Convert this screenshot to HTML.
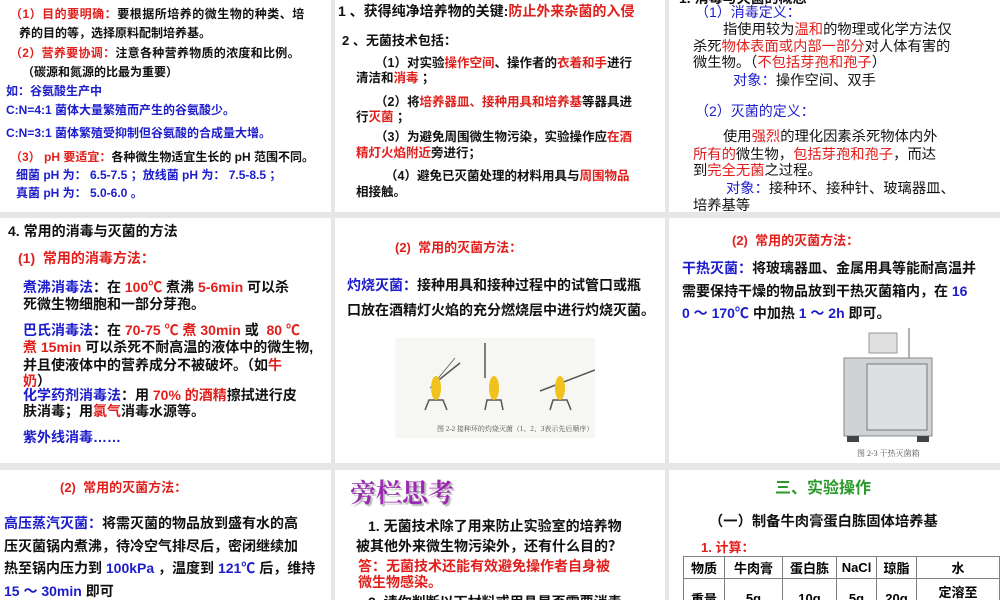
<!DOCTYPE html>
<html><head><meta charset="utf-8"><style>
body{margin:0;width:1000px;height:600px;background:#e6e6e6;position:relative;overflow:hidden;font-family:"Liberation Sans","Noto Sans CJK SC",sans-serif;}
.p{position:absolute;background:#fff;overflow:hidden;}
.l{position:absolute;white-space:nowrap;font-weight:bold;color:#111;line-height:1;}
.r{color:#e0201c}.b{color:#1c1ccc}.n{font-weight:normal}
</style></head><body>
<div class="p" style="left:0;top:0;width:331px;height:212px">
<div class="l" style="left:10px;top:8px;font-size:12px;letter-spacing:0.5px"><span class="r">（1）目的要明确：</span>要根据所培养的微生物的种类、培</div>
<div class="l" style="left:19px;top:27px;font-size:12px">养的目的等，选择原料配制培养基。</div>
<div class="l" style="left:10px;top:47px;font-size:12px;letter-spacing:0.3px"><span class="r">（2）营养要协调：</span>注意各种营养物质的浓度和比例。</div>
<div class="l" style="left:22px;top:66px;font-size:12px">（碳源和氮源的比最为重要）</div>
<div class="l b" style="left:6px;top:85px;font-size:12px">如：谷氨酸生产中</div>
<div class="l b" style="left:6px;top:104px;font-size:12px">C:N=4:1 菌体大量繁殖而产生的谷氨酸少。</div>
<div class="l b" style="left:6px;top:127px;font-size:12px">C:N=3:1 菌体繁殖受抑制但谷氨酸的合成量大增。</div>
<div class="l" style="left:10px;top:151px;font-size:12px"><span class="r">（3） pH 要适宜：</span>各种微生物适宜生长的 pH 范围不同。</div>
<div class="l b" style="left:16px;top:169px;font-size:12px">细菌 pH 为： 6.5-7.5 ；放线菌 pH 为： 7.5-8.5 ；</div>
<div class="l b" style="left:16px;top:187px;font-size:12px">真菌 pH 为： 5.0-6.0 。</div>
</div>
<div class="p" style="left:335px;top:0;width:330px;height:212px">
<div class="l" style="left:3px;top:4px;font-size:14px">1 、获得纯净培养物的关键:<span class="r">防止外来杂菌的入侵</span></div>
<div class="l" style="left:7px;top:34px;font-size:13px">2 、无菌技术包括：</div>
<div class="l" style="left:40px;top:57px;font-size:12.5px"><span>（1）对实验</span><span class="r">操作空间</span>、操作者的<span class="r">衣着和手</span>进行</div>
<div class="l" style="left:21px;top:72px;font-size:12.5px">清洁和<span class="r">消毒</span> ；</div>
<div class="l" style="left:40px;top:96px;font-size:12.5px">（2）将<span class="r">培养器皿、接种用具和培养基</span>等器具进</div>
<div class="l" style="left:21px;top:111px;font-size:12.5px">行<span class="r">灭菌</span> ；</div>
<div class="l" style="left:40px;top:131px;font-size:12.5px">（3）为避免周围微生物污染，实验操作应<span class="r">在酒</span></div>
<div class="l" style="left:21px;top:147px;font-size:12.5px"><span class="r">精灯火焰附近</span>旁进行；</div>
<div class="l" style="left:50px;top:170px;font-size:12.5px">（4）避免已灭菌处理的材料用具与<span class="r">周围物品</span></div>
<div class="l" style="left:21px;top:186px;font-size:12.5px">相接触。</div>
</div>
<div class="p" style="left:669px;top:0;width:331px;height:212px">
<div class="l" style="left:10px;top:-9px;font-size:14px">1. 消毒与灭菌的概念</div>
<div class="l n b" style="left:26px;top:5px;font-size:14px">（1）消毒定义：</div>
<div class="l n" style="left:54px;top:23px;font-size:14.3px">指使用较为<span class="r">温和</span>的物理或化学方法仅</div>
<div class="l n" style="left:24px;top:40px;font-size:14.3px">杀死<span class="r">物体表面或内部一部分</span>对人体有害的</div>
<div class="l n" style="left:24px;top:56px;font-size:14.3px">微生物。（<span class="r">不包括芽孢和孢子</span>）</div>
<div class="l n" style="left:64px;top:74px;font-size:14.3px"><span class="b">对象：</span>操作空间、双手</div>
<div class="l n b" style="left:26px;top:104px;font-size:14px">（2）灭菌的定义：</div>
<div class="l n" style="left:54px;top:130px;font-size:14.3px">使用<span class="r">强烈</span>的理化因素杀死物体内外</div>
<div class="l n" style="left:24px;top:148px;font-size:14.3px"><span class="r">所有的</span>微生物，<span class="r">包括芽孢和孢子</span>，而达</div>
<div class="l n" style="left:24px;top:164px;font-size:14.3px">到<span class="r">完全无菌</span>之过程。</div>
<div class="l n" style="left:57px;top:182px;font-size:14.3px"><span class="b">对象：</span>接种环、接种针、玻璃器皿、</div>
<div class="l n" style="left:24px;top:199px;font-size:14.3px">培养基等</div>
</div>

<div class="p" style="left:0;top:218px;width:331px;height:245px">
<div class="l" style="left:8px;top:6px;font-size:14px">4. 常用的消毒与灭菌的方法</div>
<div class="l r" style="left:18px;top:33px;font-size:14px">(1)&nbsp; 常用的消毒方法：</div>
<div class="l" style="left:23px;top:62px;font-size:14px"><span class="b">煮沸消毒法</span>：在 <span class="r">100℃</span> 煮沸 <span class="r">5-6min</span> 可以杀</div>
<div class="l" style="left:23px;top:79px;font-size:14px">死微生物细胞和一部分芽孢。</div>
<div class="l" style="left:23px;top:105px;font-size:14px"><span class="b">巴氏消毒法</span>：在 <span class="r">70-75 ℃ 煮 30min</span> 或 &nbsp;<span class="r">80 ℃</span></div>
<div class="l" style="left:23px;top:122px;font-size:14px"><span class="r">煮 15min</span> 可以杀死不耐高温的液体中的微生物,</div>
<div class="l" style="left:23px;top:140px;font-size:14px">并且使液体中的营养成分不被破坏。（如<span class="r">牛</span></div>
<div class="l r" style="left:23px;top:156px;font-size:14px">奶<span style="color:#111">）</span></div>
<div class="l" style="left:23px;top:170px;font-size:14px"><span class="b">化学药剂消毒法</span>：用 <span class="r">70% 的酒精</span>擦拭进行皮</div>
<div class="l" style="left:23px;top:186px;font-size:14px">肤消毒；用<span class="r">氯气</span>消毒水源等。</div>
<div class="l b" style="left:23px;top:212px;font-size:14px">紫外线消毒……</div>
</div>
<div class="p" style="left:335px;top:218px;width:330px;height:245px">
<div class="l r" style="left:60px;top:23px;font-size:13px">(2)&nbsp; 常用的灭菌方法：</div>
<div class="l" style="left:12px;top:60px;font-size:14px"><span class="b">灼烧灭菌：</span>接种用具和接种过程中的试管口或瓶</div>
<div class="l" style="left:12px;top:85px;font-size:14px">口放在酒精灯火焰的充分燃烧层中进行灼烧灭菌。</div>
<svg style="position:absolute;left:60px;top:120px" width="200" height="100">
<rect width="200" height="100" fill="#f6f6f2"/>
<g stroke="#555" fill="none" stroke-width="1.5">
<line x1="40" y1="45" x2="65" y2="25"/><line x1="60" y1="20" x2="35" y2="50" stroke-width="0.8"/>
<line x1="90" y1="5" x2="90" y2="40"/>
<line x1="145" y1="53" x2="200" y2="32"/>
<path d="M30 72 L34 62 L48 62 L52 72 M90 72 L92 62 L106 62 L108 72 M155 72 L158 62 L172 62 L176 72"/>
</g>
<g fill="#f2c21c"><ellipse cx="41" cy="50" rx="5" ry="12"/><ellipse cx="99" cy="50" rx="5" ry="12"/><ellipse cx="165" cy="50" rx="5" ry="12"/></g>
<text x="42" y="93" font-size="7" fill="#555" font-family="Liberation Serif,Noto Serif CJK SC,serif">图 2-2 接种环的灼烧灭菌（1、2、3表示先后顺序）</text>
</svg>
</div>
<div class="p" style="left:669px;top:218px;width:331px;height:245px">
<div class="l r" style="left:63px;top:16px;font-size:13px">(2)&nbsp; 常用的灭菌方法：</div>
<div class="l" style="left:13px;top:43px;font-size:14px"><span class="b">干热灭菌：</span>将玻璃器皿、金属用具等能耐高温并</div>
<div class="l" style="left:13px;top:66px;font-size:14px">需要保持干燥的物品放到干热灭菌箱内，在 <span class="b">16</span></div>
<div class="l" style="left:13px;top:88px;font-size:14px"><span class="b">0 ～ 170℃</span> 中加热 <span class="b">1 ～ 2h</span> 即可。</div>
<svg style="position:absolute;left:170px;top:110px" width="100" height="130">
<rect x="5" y="30" width="88" height="78" fill="#cfd3d6" stroke="#888"/>
<rect x="28" y="36" width="60" height="66" fill="#dde0e2" stroke="#777"/>
<rect x="30" y="5" width="28" height="20" fill="#e0e0e0" stroke="#999"/>
<line x1="70" y1="0" x2="70" y2="30" stroke="#666"/>
<rect x="8" y="108" width="12" height="6" fill="#444"/><rect x="78" y="108" width="12" height="6" fill="#444"/>
<text x="18" y="128" font-size="8" fill="#555" font-family="Liberation Serif,Noto Serif CJK SC,serif">图 2-3 干热灭菌箱</text>
</svg>
</div>

<div class="p" style="left:0;top:470px;width:331px;height:130px">
<div class="l r" style="left:60px;top:11px;font-size:13px">(2)&nbsp; 常用的灭菌方法：</div>
<div class="l" style="left:4px;top:46px;font-size:14px"><span class="b">高压蒸汽灭菌：</span>将需灭菌的物品放到盛有水的高</div>
<div class="l" style="left:4px;top:69px;font-size:14px">压灭菌锅内煮沸，待冷空气排尽后，密闭继续加</div>
<div class="l" style="left:4px;top:91px;font-size:14px">热至锅内压力到 <span class="b">100kPa</span> ，温度到 <span class="b">121℃</span> 后，维持</div>
<div class="l" style="left:4px;top:114px;font-size:14px"><span class="b">15 ～ 30min</span> 即可</div>
</div>
<div class="p" style="left:335px;top:470px;width:330px;height:130px">
<div class="l" style="left:15px;top:9px;font-size:26px;color:#9a2bb0;text-shadow:2px 2px 1px #bbb;font-family:'Noto Serif CJK SC',serif">旁栏思考</div>
<div class="l" style="left:33px;top:49px;font-size:14px">1. 无菌技术除了用来防止实验室的培养物</div>
<div class="l" style="left:21px;top:69px;font-size:14px">被其他外来微生物污染外，还有什么目的？</div>
<div class="l r" style="left:23px;top:89px;font-size:14px">答：无菌技术还能有效避免操作者自身被</div>
<div class="l r" style="left:23px;top:105px;font-size:14px">微生物感染。</div>
<div class="l" style="left:33px;top:125px;font-size:14px">2. 请你判断以下材料或用具是否需要消毒</div>
</div>
<div class="p" style="left:669px;top:470px;width:331px;height:130px">
<div class="l" style="left:106px;top:11px;font-size:16px;color:#2a9a2a">三、实验操作</div>
<div class="l" style="left:40px;top:45px;font-size:14.3px">（一）制备牛肉膏蛋白胨固体培养基</div>
<div class="l r" style="left:32px;top:71px;font-size:13px">1. 计算：</div>
<table style="position:absolute;left:14px;top:86px;border-collapse:collapse;font-weight:bold;font-size:13px;text-align:center" border="1" cellpadding="0">
<tr style="height:22px"><td style="width:40px">物质</td><td style="width:57px">牛肉膏</td><td style="width:53px">蛋白胨</td><td style="width:39px">NaCl</td><td style="width:39px">琼脂</td><td style="width:82px">水</td></tr>
<tr style="height:40px"><td>重量</td><td>5g</td><td>10g</td><td>5g</td><td>20g</td><td>定溶至<br>1000mL</td></tr>
</table>
</div>
</body></html>
